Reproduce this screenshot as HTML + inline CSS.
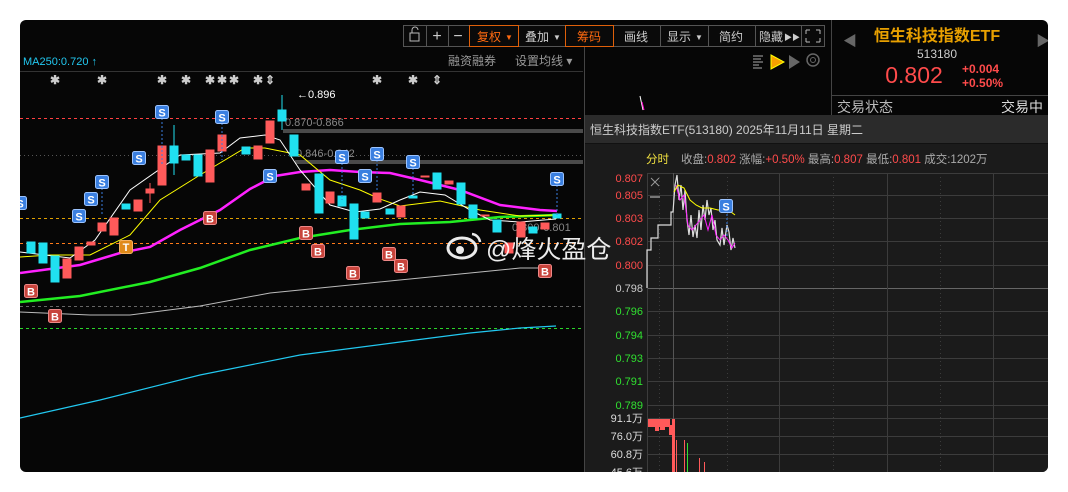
<!DOCTYPE html>
<html><head><meta charset="utf-8"><style>
html,body{margin:0;padding:0;background:#fff;width:1068px;height:492px;overflow:hidden}
svg text{font-family:"Liberation Sans","Noto Sans CJK SC",sans-serif}
</style></head><body>
<svg width="1068" height="492" viewBox="0 0 1068 492" xmlns="http://www.w3.org/2000/svg">
<defs>
<clipPath id="r"><rect x="20" y="20" width="1028" height="452" rx="6"/></clipPath>
<g id="S"><rect x="-6.5" y="-6.5" width="13" height="13" rx="2" fill="#3a7fe0" stroke="#9cc4ff" stroke-width="1"/><text x="0" y="4.5" font-size="11" font-weight="bold" fill="#fff" text-anchor="middle">S</text></g>
<g id="B"><rect x="-6.5" y="-6.5" width="13" height="13" rx="2" fill="#c8443c" stroke="#e88" stroke-width="1"/><text x="0" y="4.5" font-size="11" font-weight="bold" fill="#fff" text-anchor="middle">B</text></g>
</defs>
<g clip-path="url(#r)">
<rect x="20" y="20" width="1028" height="452" fill="#060606"/>
<!-- toolbar -->
<g font-size="12" fill="#ccc" text-anchor="middle">
<rect x="403.5" y="25.5" width="421" height="21" fill="#0a0a0a" stroke="#555"/>
<line x1="426.5" y1="25" x2="426.5" y2="47" stroke="#555"/><line x1="448.5" y1="25" x2="448.5" y2="47" stroke="#555"/>
<line x1="469.5" y1="25" x2="469.5" y2="47" stroke="#555"/><line x1="518.5" y1="25" x2="518.5" y2="47" stroke="#555"/>
<line x1="565.5" y1="25" x2="565.5" y2="47" stroke="#555"/><line x1="613.5" y1="25" x2="613.5" y2="47" stroke="#555"/>
<line x1="660.5" y1="25" x2="660.5" y2="47" stroke="#555"/><line x1="708.5" y1="25" x2="708.5" y2="47" stroke="#555"/>
<line x1="755.5" y1="25" x2="755.5" y2="47" stroke="#555"/><line x1="801.5" y1="25" x2="801.5" y2="47" stroke="#555"/>
<rect x="469.5" y="25.5" width="49" height="21" fill="none" stroke="#e0600a"/>
<rect x="565.5" y="25.5" width="48" height="21" fill="none" stroke="#e0600a"/>
<rect x="410" y="33" width="9" height="8" fill="none" stroke="#bbb"/><path d="M412 33v-3a3 3 0 0 1 6 0" fill="none" stroke="#bbb"/>
<text x="437" y="41" font-size="16">+</text><text x="458" y="41" font-size="16">−</text>
<text x="489" y="41" fill="#ff6a10">复权</text><text x="509" y="40" font-size="8" fill="#ff6a10">▼</text>
<text x="537" y="41">叠加</text><text x="557" y="40" font-size="8">▼</text>
<text x="589" y="41" fill="#ff6a10">筹码</text>
<text x="636" y="41">画线</text>
<text x="679" y="41">显示</text><text x="699" y="40" font-size="8">▼</text>
<text x="731" y="41">简约</text>
<text x="771" y="41">隐藏</text><text x="792" y="40" font-size="8">▶▶</text>
<path d="M806 30h4M806 30v4M820 30h-4M820 30v4M806 42h4M806 42v-4M820 42h-4M820 42v-4" stroke="#bbb" fill="none"/>
</g>
<line x1="831.5" y1="20" x2="831.5" y2="115" stroke="#444"/>
<!-- right info -->
<text x="843" y="46" font-size="14" fill="#666">◀</text>
<text x="1036" y="46" font-size="14" fill="#666">▶</text>
<text x="937" y="41" font-size="16" fill="#e8a000" text-anchor="middle" font-weight="bold">恒生科技指数ETF</text>
<text x="937" y="58" font-size="12" fill="#ccc" text-anchor="middle">513180</text>
<text x="914" y="83" font-size="23" fill="#ff4b4b" text-anchor="middle">0.802</text>
<text x="962" y="73" font-size="12" fill="#ff4b4b" font-weight="bold">+0.004</text>
<text x="962" y="87" font-size="12" fill="#ff4b4b" font-weight="bold">+0.50%</text>
<line x1="832" y1="95.5" x2="1048" y2="95.5" stroke="#444"/>
<text x="837" y="112" font-size="14" fill="#bbb">交易状态</text>
<text x="1043" y="112" font-size="14" fill="#ddd" text-anchor="end">交易中</text>
<!-- left header -->
<text x="23" y="65" font-size="11" fill="#22c8f0">MA250:0.720 ↑</text>
<text x="448" y="65" font-size="12" fill="#999">融资融券</text>
<text x="515" y="65" font-size="12" fill="#999">设置均线 ▾</text>
<line x1="20" y1="71.5" x2="583" y2="71.5" stroke="#333"/>
<line x1="584.5" y1="47" x2="584.5" y2="472" stroke="#444"/>
<!-- icons -->
<path d="M753 56h10M753 59h8M753 62h10M753 65h6M753 68h9" stroke="#aaa"/>
<path d="M771 55l13 7-13 7z" fill="#f5a000" stroke="#ff0"/>
<path d="M789 55l11 7-11 7z" fill="#666"/>
<circle cx="813" cy="60" r="6" fill="none" stroke="#666" stroke-width="1.5"/><circle cx="813" cy="60" r="2.5" fill="none" stroke="#666"/>
<path d="M640 96l3 14" stroke="#fff"/><path d="M642 102l2 8" stroke="#f0c"/>
<!-- asterisks -->
<g font-size="12" fill="#ccc" text-anchor="middle" font-weight="bold">
<text x="55" y="84">✱</text><text x="102" y="84">✱</text><text x="162" y="84">✱</text><text x="186" y="84">✱</text><text x="210" y="84">✱</text><text x="222" y="84">✱</text><text x="234" y="84">✱</text><text x="258" y="84">✱</text><text x="270" y="84">⇕</text><text x="377" y="84">✱</text><text x="413" y="84">✱</text><text x="437" y="84">⇕</text>
</g>
<!-- level lines -->
<line x1="20" y1="118.5" x2="583" y2="118.5" stroke="#ff4040" stroke-dasharray="3,3"/>
<rect x="283" y="129" width="300" height="4" fill="#4a4a4a"/>
<rect x="295" y="160" width="288" height="4" fill="#4a4a4a"/>
<line x1="20" y1="155.5" x2="583" y2="155.5" stroke="#555" stroke-dasharray="1,3"/>
<line x1="20" y1="218.5" x2="583" y2="218.5" stroke="#e0a000" stroke-dasharray="3,3"/>
<line x1="20" y1="243.5" x2="583" y2="243.5" stroke="#ff7a1a" stroke-dasharray="3,3"/>
<line x1="20" y1="306.5" x2="583" y2="306.5" stroke="#666" stroke-dasharray="3,3"/>
<line x1="20" y1="328.5" x2="583" y2="328.5" stroke="#2ad52a" stroke-dasharray="3,3"/>
<text x="285" y="126" font-size="11" fill="#888">0.870-0.866</text>
<text x="296" y="157" font-size="11" fill="#888">0.846-0.842</text>
<text x="512" y="231" font-size="11" fill="#888">0.800-0.801</text>
<text x="297" y="98" font-size="11" fill="#fff">←0.896</text>
<!-- MA lines -->
<polyline fill="none" stroke="#22c8f0" stroke-width="1.2" points="20,418 100,400 200,375 300,355 400,342 470,333 520,328 556,326"/>
<polyline fill="none" stroke="#bbb" stroke-width="1" points="20,312 90,315 130,315 200,306 270,293 350,285 450,275 520,268 540,268"/>
<polyline fill="none" stroke="#22ee22" stroke-width="2.5" points="20,302 80,296 150,282 200,268 250,250 300,238 350,230 400,224 450,222 500,217 557,215"/>
<polyline fill="none" stroke="#ff22ff" stroke-width="2.5" points="20,273 80,265 120,253 150,247 180,230 220,210 250,189 275,176 300,172 330,170 360,172 390,173 420,180 460,190 500,205 540,210 557,211"/>
<polyline fill="none" stroke="#ffff00" stroke-width="1" points="20,257 50,255 90,255 130,235 160,200 200,175 245,148 265,148 300,155 330,180 360,190 380,199 400,206 440,201 480,210 520,216 556,215"/>
<polyline fill="none" stroke="#fff" stroke-width="1" points="20,252 70,258 95,240 130,190 180,155 220,153 240,138 265,135 280,140 300,170 330,205 355,212 380,209 400,200 420,192 445,195 470,210 490,220 520,222 556,219"/>
<!-- candles -->
<g stroke-width="1">
<g fill="#20e0f0" stroke="#20e0f0">
<line x1="282" y1="95" x2="282" y2="130"/>
<rect x="27" y="242" width="8" height="11"/><rect x="39" y="243" width="8" height="20"/><rect x="51" y="256" width="8" height="26"/><rect x="122" y="204" width="8" height="5"/>
<rect x="170" y="146" width="8" height="17"/><line x1="174" y1="125" x2="174" y2="175"/><rect x="182" y="155" width="8" height="5"/><rect x="194" y="155" width="8" height="21"/>
<rect x="242" y="147" width="8" height="7"/><rect x="278" y="110" width="8" height="11"/><rect x="290" y="135" width="8" height="21"/>
<rect x="315" y="174" width="8" height="39"/><rect x="338" y="196" width="8" height="10"/><rect x="350" y="204" width="8" height="35"/><rect x="361" y="212" width="8" height="6"/>
<rect x="386" y="209" width="8" height="5"/><rect x="409" y="196" width="8" height="2"/><rect x="433" y="173" width="8" height="16"/><rect x="457" y="183" width="8" height="21"/>
<rect x="469" y="205" width="8" height="13"/><rect x="493" y="220" width="8" height="12"/><rect x="529" y="227" width="8" height="6"/><rect x="553" y="214" width="8" height="4"/>
</g>
<g fill="#ff5a5a" stroke="#ff5a5a">
<rect x="63" y="259" width="8" height="19"/><rect x="75" y="247" width="8" height="13"/><rect x="87" y="242" width="8" height="3"/><rect x="98" y="223" width="8" height="8"/>
<rect x="110" y="218" width="8" height="17"/><rect x="134" y="200" width="8" height="11"/><rect x="146" y="189" width="8" height="4"/><line x1="150" y1="183" x2="150" y2="203"/>
<rect x="158" y="146" width="8" height="39"/><rect x="206" y="150" width="8" height="32"/><rect x="218" y="135" width="8" height="16"/><rect x="230" y="147" width="8" height="0"/>
<rect x="254" y="146" width="8" height="13"/><rect x="266" y="121" width="8" height="22"/><rect x="302" y="184" width="8" height="6"/><rect x="326" y="192" width="8" height="11"/>
<rect x="373" y="193" width="8" height="9"/><rect x="397" y="206" width="8" height="11"/><rect x="421" y="176" width="8" height="1"/><rect x="445" y="181" width="8" height="3"/>
<rect x="481" y="215" width="8" height="1"/><rect x="505" y="243" width="8" height="10"/><rect x="517" y="222" width="8" height="15"/><rect x="541" y="223" width="8" height="6"/>
</g>
</g>
<!-- markers -->
<g stroke="#3a7fe0" stroke-dasharray="2,2"><line x1="162" y1="118" x2="162" y2="165"/><line x1="222" y1="123" x2="222" y2="160"/><line x1="342" y1="163" x2="342" y2="200"/><line x1="377" y1="160" x2="377" y2="190"/><line x1="413" y1="168" x2="413" y2="195"/><line x1="557" y1="185" x2="557" y2="217"/><line x1="102" y1="188" x2="102" y2="215"/></g>
<use href="#S" x="20" y="203"/><use href="#S" x="79" y="216"/><use href="#S" x="91" y="199"/><use href="#S" x="102" y="182"/><use href="#S" x="139" y="158"/><use href="#S" x="162" y="112"/><use href="#S" x="222" y="117"/><use href="#S" x="270" y="176"/><use href="#S" x="342" y="157"/><use href="#S" x="365" y="176"/><use href="#S" x="377" y="154"/><use href="#S" x="413" y="162"/><use href="#S" x="557" y="179"/>
<use href="#B" x="31" y="291"/><use href="#B" x="55" y="316"/><use href="#B" x="210" y="218"/><use href="#B" x="306" y="233"/><use href="#B" x="318" y="251"/><use href="#B" x="353" y="273"/><use href="#B" x="389" y="254"/><use href="#B" x="401" y="266"/><use href="#B" x="545" y="271"/>
<rect x="119.5" y="240.5" width="13" height="13" rx="2" fill="#e08a1a" stroke="#f5b060"/><text x="126" y="251" font-size="11" font-weight="bold" fill="#fff" text-anchor="middle">T</text>
<!-- popup -->
<rect x="585" y="115" width="463" height="357" fill="#1b1b1b"/>
<rect x="585" y="115" width="463" height="28" fill="#2b2b2b"/>
<line x1="585" y1="143.5" x2="1048" y2="143.5" stroke="#111"/>
<text x="590" y="134" font-size="12" fill="#ccc">恒生科技指数ETF(513180) 2025年11月11日 星期二</text>
<g font-size="11.5">
<text x="646" y="163" fill="#f0e040">分时</text>
<text x="681" y="163" fill="#aaa">收盘:<tspan fill="#ff4b4b">0.802</tspan> 涨幅:<tspan fill="#ff4b4b">+0.50%</tspan> 最高:<tspan fill="#ff4b4b">0.807</tspan> 最低:<tspan fill="#ff4b4b">0.801</tspan> 成交:1202万</text>
</g>
<g stroke="#3c3c3c">
<line x1="647" y1="173.5" x2="1048" y2="173.5"/><line x1="647" y1="195.5" x2="1048" y2="195.5"/><line x1="647" y1="218.5" x2="1048" y2="218.5"/><line x1="647" y1="241.5" x2="1048" y2="241.5"/><line x1="647" y1="265.5" x2="1048" y2="265.5"/>
<line x1="647" y1="288.5" x2="1048" y2="288.5" stroke="#666"/>
<line x1="647" y1="311.5" x2="1048" y2="311.5"/><line x1="647" y1="335.5" x2="1048" y2="335.5"/><line x1="647" y1="358.5" x2="1048" y2="358.5"/><line x1="647" y1="381.5" x2="1048" y2="381.5"/><line x1="647" y1="405.5" x2="1048" y2="405.5"/>
<line x1="647" y1="418.5" x2="1048" y2="418.5"/><line x1="647" y1="436.5" x2="1048" y2="436.5"/><line x1="647" y1="454.5" x2="1048" y2="454.5"/>
<line x1="647.5" y1="173" x2="647.5" y2="472"/><line x1="673.5" y1="173" x2="673.5" y2="472" stroke="#555"/><line x1="779.5" y1="173" x2="779.5" y2="472"/><line x1="887.5" y1="173" x2="887.5" y2="472"/><line x1="993.5" y1="173" x2="993.5" y2="472"/>
<g stroke-dasharray="1,3"><line x1="659.5" y1="173" x2="659.5" y2="472"/><line x1="727.5" y1="173" x2="727.5" y2="472"/><line x1="833.5" y1="173" x2="833.5" y2="472"/><line x1="940.5" y1="173" x2="940.5" y2="472"/></g>
</g>
<g font-size="11" text-anchor="end">
<text x="643" y="182" fill="#ff4b4b">0.807</text><text x="643" y="199" fill="#ff4b4b">0.805</text><text x="643" y="222" fill="#ff4b4b">0.803</text><text x="643" y="245" fill="#ff4b4b">0.802</text><text x="643" y="269" fill="#ff4b4b">0.800</text>
<text x="643" y="292" fill="#ccc">0.798</text>
<text x="643" y="315" fill="#30e030">0.796</text><text x="643" y="339" fill="#30e030">0.794</text><text x="643" y="362" fill="#30e030">0.793</text><text x="643" y="385" fill="#30e030">0.791</text><text x="643" y="409" fill="#30e030">0.789</text>
<text x="643" y="422" fill="#ddd">91.1万</text><text x="643" y="440" fill="#ddd">76.0万</text><text x="643" y="458" fill="#ddd">60.8万</text><text x="643" y="476" fill="#ddd">45.6万</text>
</g>
<path d="M651 178l8 8M659 178l-8 8" stroke="#999"/><path d="M650 197h10" stroke="#777" stroke-width="2"/>
<polyline fill="none" stroke="#ddd" stroke-width="1.2" points="647,288 647,250 651,250 651,238 658,238 658,225 671,225 671,212 673,212 675,185 677,175 679,200 681,185 683,210 685,190 687,220 689,235 691,215 693,237 695,225 697,238 699,210 701,230 703,205 705,220 707,200 709,215 711,208 713,230 715,220 717,240 720,245 722,228 724,245 727,225 729,232 731,250 733,238 735,248"/>
<polyline fill="none" stroke="#ff22ff" stroke-width="1" points="676,185 680,200 684,195 688,225 692,230 696,225 700,220 704,215 708,230 712,215 716,235 720,240 724,235 728,240 732,248 735,243"/>
<polyline fill="none" stroke="#ffff00" stroke-width="1" points="674,192 678,185 684,188 690,200 696,205 702,208 710,208 718,210 726,210 731,212 735,215"/>
<line x1="727" y1="210" x2="727" y2="238" stroke="#3a7fe0" stroke-dasharray="2,2"/>
<use href="#S" x="726" y="206"/>
<g fill="#ff5a5a"><rect x="648" y="419" width="22" height="8"/><rect x="655" y="427" width="4" height="4"/><rect x="660" y="425" width="5" height="5"/><rect x="669" y="425" width="3" height="10"/><rect x="672" y="419" width="3" height="53"/><rect x="676" y="440" width="1" height="32"/><rect x="684" y="440" width="1" height="32"/><rect x="699" y="458" width="1" height="14"/><rect x="704" y="462" width="1" height="10"/></g>
<rect x="687" y="443" width="1" height="29" fill="#30e030"/>
<!-- watermark -->
<g fill="#fff" opacity="0.92">
<ellipse cx="462" cy="248" rx="14" ry="10" fill="none" stroke="#fff" stroke-width="3"/>
<circle cx="460" cy="250" r="4"/>
<path d="M472 234a9 9 0 0 1 8 8" fill="none" stroke="#fff" stroke-width="2.5"/>
<text x="486" y="258" font-size="25" fill="#fff">@烽火盈仓</text>
</g>
</g>
</svg>
</body></html>
